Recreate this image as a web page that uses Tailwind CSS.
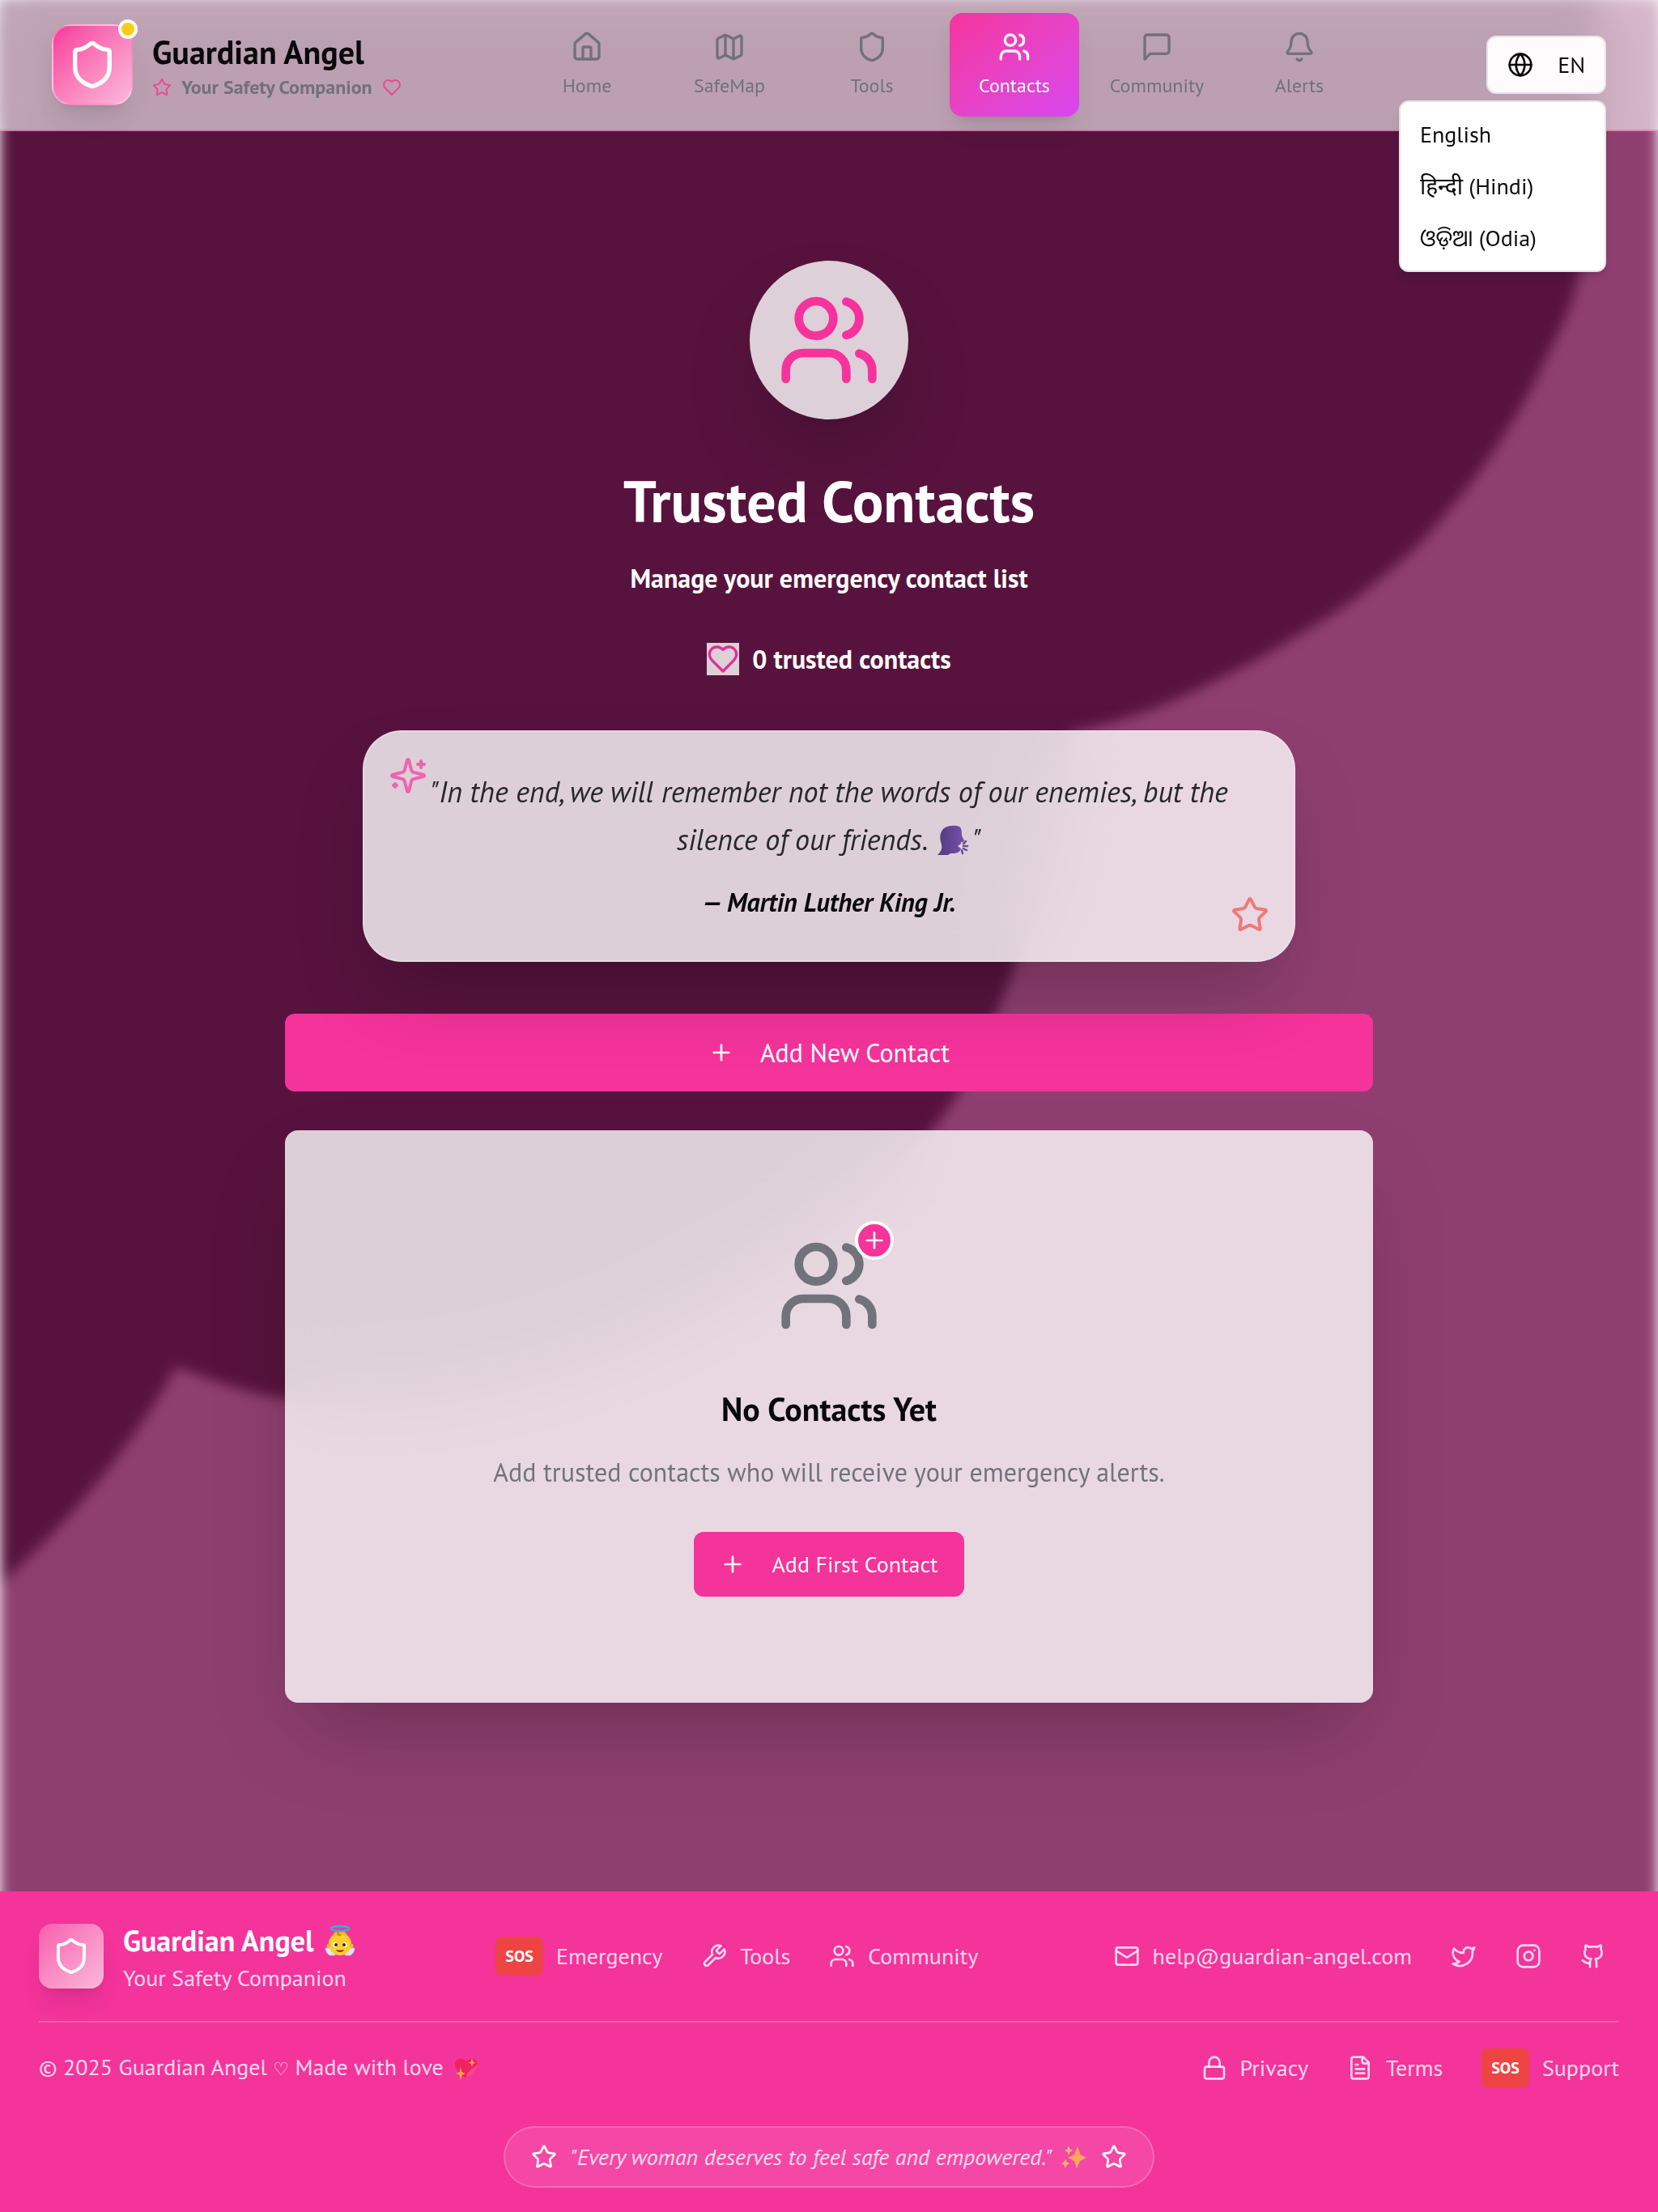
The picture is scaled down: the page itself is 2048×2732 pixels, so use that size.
<!DOCTYPE html>
<html lang="en">
<head>
<meta charset="utf-8">
<meta name="viewport" content="width=device-width, initial-scale=1">
<title>Guardian Angel – Trusted Contacts</title>
<script src="https://cdn.jsdelivr.net/npm/@tailwindcss/browser@4"></script>
</head>
<body class="bg-white font-['PT_Sans','Lato','Noto_Sans_Oriya','Noto_Sans_Devanagari','Noto_Sans',sans-serif] text-zinc-950 antialiased">
<!-- Icon sprite -->
<svg class="hidden" aria-hidden="true">
  <symbol id="shield" viewBox="0 0 24 24"><path d="M20 13c0 5-3.5 7.5-7.66 8.95a1 1 0 0 1-.67-.01C7.5 20.5 4 18 4 13V6a1 1 0 0 1 1-1c2 0 4.500-1.200 6.240-2.720a1.170 1.170 0 0 1 1.520 0C14.510 3.810 17 5 19 5a1 1 0 0 1 1 1z"/></symbol>
  <symbol id="star" viewBox="0 0 24 24"><path d="M11.525 2.295a.53.53 0 0 1 .95 0l2.310 4.679a2.123 2.123 0 0 0 1.595 1.160l5.166.756a.53.53 0 0 1 .294.904l-3.736 3.638a2.123 2.123 0 0 0-.611 1.878l.882 5.140a.53.53 0 0 1-.771.560l-4.618-2.428a2.122 2.122 0 0 0-1.973 0L6.396 21.010a.53.53 0 0 1-.770-.560l.881-5.139a2.122 2.122 0 0 0-.611-1.879L2.160 9.795a.53.53 0 0 1 .294-.906l5.165-.755a2.122 2.122 0 0 0 1.597-1.160z"/></symbol>
  <symbol id="heart" viewBox="0 0 24 24"><path d="M19 14c1.490-1.460 3-3.210 3-5.500A5.500 5.500 0 0 0 16.500 3c-1.760 0-3 .5-4.500 2-1.500-1.500-2.740-2-4.500-2A5.500 5.500 0 0 0 2 8.500c0 2.300 1.500 4.050 3 5.500l7 7Z"/></symbol>
  <symbol id="home" viewBox="0 0 24 24"><path d="M15 21v-8a1 1 0 0 0-1-1h-4a1 1 0 0 0-1 1v8"/><path d="M3 10a2 2 0 0 1 .709-1.528l7-5.999a2 2 0 0 1 2.582 0l7 5.999A2 2 0 0 1 21 10v9a2 2 0 0 1-2 2H5a2 2 0 0 1-2-2z"/></symbol>
  <symbol id="map" viewBox="0 0 24 24"><path d="M14.106 5.553a2 2 0 0 0 1.788 0l3.659-1.830A1 1 0 0 1 21 4.619v12.764a1 1 0 0 1-.553.894l-4.553 2.277a2 2 0 0 1-1.788 0l-4.212-2.106a2 2 0 0 0-1.788 0l-3.659 1.830A1 1 0 0 1 3 19.381V6.618a1 1 0 0 1 .553-.894l4.553-2.277a2 2 0 0 1 1.788 0z"/><path d="M15 5.764v15M9 3.236v15"/></symbol>
  <symbol id="users" viewBox="0 0 24 24"><path d="M16 21v-2a4 4 0 0 0-4-4H6a4 4 0 0 0-4 4v2"/><circle cx="9" cy="7" r="4"/><path d="M22 21v-2a4 4 0 0 0-3-3.870M16 3.130a4 4 0 0 1 0 7.750"/></symbol>
  <symbol id="chat" viewBox="0 0 24 24"><path d="M21 15a2 2 0 0 1-2 2H7l-4 4V5a2 2 0 0 1 2-2h14a2 2 0 0 1 2 2z"/></symbol>
  <symbol id="bell" viewBox="0 0 24 24"><path d="M10.268 21a2 2 0 0 0 3.464 0M3.262 15.326A1 1 0 0 0 4 17h16a1 1 0 0 0 .740-1.673C19.410 13.956 18 12.499 18 8A6 6 0 0 0 6 8c0 4.499-1.411 5.956-2.738 7.326"/></symbol>
  <symbol id="globe" viewBox="0 0 24 24"><circle cx="12" cy="12" r="10"/><path d="M12 2a14.500 14.500 0 0 0 0 20 14.500 14.500 0 0 0 0-20M2 12h20"/></symbol>
  <symbol id="plus" viewBox="0 0 24 24"><path d="M5 12h14M12 5v14"/></symbol>
  <symbol id="sparkles" viewBox="0 0 24 24"><path d="M9.937 15.500A2 2 0 0 0 8.500 14.063l-6.135-1.582a.5.5 0 0 1 0-.962L8.500 9.936A2 2 0 0 0 9.937 8.500l1.582-6.135a.5.5 0 0 1 .963 0L14.063 8.500A2 2 0 0 0 15.500 9.937l6.135 1.581a.5.5 0 0 1 0 .964L15.500 14.063a2 2 0 0 0-1.437 1.437l-1.582 6.135a.5.5 0 0 1-.963 0z"/><path d="M20 3v4M22 5h-4M4 17v2M5 18H3"/></symbol>
  <symbol id="wrench" viewBox="0 0 24 24"><path d="M14.700 6.300a1 1 0 0 0 0 1.400l1.600 1.600a1 1 0 0 0 1.400 0l3.770-3.770a6 6 0 0 1-7.940 7.940l-6.910 6.910a2.120 2.120 0 0 1-3-3l6.910-6.910a6 6 0 0 1 7.940-7.940l-3.760 3.760z"/></symbol>
  <symbol id="mail" viewBox="0 0 24 24"><rect width="20" height="16" x="2" y="4" rx="2"/><path d="m22 7-8.970 5.700a1.940 1.940 0 0 1-2.060 0L2 7"/></symbol>
  <symbol id="twitter" viewBox="0 0 24 24"><path d="M22 4s-.7 2.100-2 3.400c1.600 10-9.400 17.300-18 11.600 2.200.1 4.400-.6 6-2C3 15.500.5 9.600 3 5c2.200 2.600 5.600 4.100 9 4-.9-4.200 4-6.600 7-3.800 1.100 0 3-1.200 3-1.200z"/></symbol>
  <symbol id="instagram" viewBox="0 0 24 24"><rect width="20" height="20" x="2" y="2" rx="5"/><path d="M16 11.370A4 4 0 1 1 12.630 8 4 4 0 0 1 16 11.370zM17.500 6.500h.01"/></symbol>
  <symbol id="github" viewBox="0 0 24 24"><path d="M15 22v-4a4.800 4.800 0 0 0-1-3.500c3 0 6-2 6-5.500.08-1.250-.27-2.480-1-3.500.28-1.150.28-2.350 0-3.500 0 0-1 0-3 1.500-2.640-.5-5.360-.5-8 0C6 2 5 2 5 2c-.3 1.150-.3 2.350 0 3.500A5.403 5.403 0 0 0 4 9c0 3.500 3 5.500 6 5.500-.39.49-.68 1.050-.85 1.650-.17.6-.22 1.230-.15 1.850v4"/><path d="M9 18c-4.510 2-5-2-7-2"/></symbol>
  <symbol id="lock" viewBox="0 0 24 24"><rect width="18" height="11" x="3" y="11" rx="2"/><path d="M7 11V7a5 5 0 0 1 10 0v4"/></symbol>
  <symbol id="file" viewBox="0 0 24 24"><path d="M15 2H6a2 2 0 0 0-2 2v16a2 2 0 0 0 2 2h12a2 2 0 0 0 2-2V7ZM14 2v4a2 2 0 0 0 2 2h4M10 9H8M16 13H8M16 17H8"/></symbol>
</svg>

<div class="relative isolate flex min-h-screen flex-col overflow-hidden">
  <!-- Blurred backdrop -->
  <svg class="absolute inset-0 -z-10 size-full blur-[8px]" viewBox="0 0 2048 2732" preserveAspectRatio="none" aria-hidden="true">
    <rect width="2048" height="2732" fill="#8f3f6f"/>
    <path fill="#57133d" d="M0 0H1972C1974 150 1968 265 1949 344C1942 380 1928 405 1908 446C1892 480 1880 503 1860 533C1840 567 1816 599 1789 630C1766 660 1738 688 1707 712C1675 740 1642 762 1605 783C1572 804 1540 822 1503 839C1462 861 1420 878 1375 891L1320 905C1316 1010 1286 1110 1254 1190C1240 1232 1215 1290 1185 1347C1130 1440 1020 1520 900 1600C760 1690 560 1735 440 1734C350 1733 280 1712 218 1687C160 1790 80 1885 0 1955Z"/>
  </svg>

  <header class="relative z-20 flex h-[162px] items-center justify-between border-b-2 border-pink-500/30 bg-white/60 px-16 backdrop-blur-[24px]">
    <a href="#" class="flex w-[430px] items-center gap-6">
      <span class="relative flex size-[100px] shrink-0 items-center justify-center rounded-[24px] border-2 border-white/30 bg-linear-to-br from-[#f6339c] to-[#f9b8dc] text-white shadow-[0_20px_30px_-6px_rgb(0_0_0/0.1),0_8px_12px_-8px_rgb(0_0_0/0.1)]">
        <svg class="size-16 fill-none stroke-current stroke-2 [stroke-linecap:round] [stroke-linejoin:round]"><use href="#shield"/></svg>
        <span class="absolute -top-2 -right-2 size-6 rounded-full border-4 border-white bg-[#facc15]"></span>
      </span>
      <span class="flex flex-col gap-1 pt-1">
        <span class="text-[40px] leading-[48px] font-bold">Guardian Angel</span>
        <span class="flex items-center gap-3 text-2xl leading-8 font-bold whitespace-nowrap text-[#71717a]">
          <svg class="size-6 fill-none stroke-[#ec4899] stroke-2 [stroke-linecap:round] [stroke-linejoin:round]"><use href="#star"/></svg>
          Your Safety Companion
          <svg class="size-6 fill-none stroke-[#ec4899] stroke-2 [stroke-linecap:round] [stroke-linejoin:round]"><use href="#heart"/></svg>
        </span>
      </span>
    </a>

    <nav class="flex gap-4 text-2xl leading-8 text-[#71717a]" aria-label="Main">
      <a href="#" class="flex h-32 w-40 flex-col items-center justify-center gap-3 rounded-2xl"><svg class="size-10 fill-none stroke-current stroke-2 [stroke-linecap:round] [stroke-linejoin:round]"><use href="#home"/></svg>Home</a>
      <a href="#" class="flex h-32 w-40 flex-col items-center justify-center gap-3 rounded-2xl"><svg class="size-10 fill-none stroke-current stroke-2 [stroke-linecap:round] [stroke-linejoin:round]"><use href="#map"/></svg>SafeMap</a>
      <a href="#" class="flex h-32 w-40 flex-col items-center justify-center gap-3 rounded-2xl"><svg class="size-10 fill-none stroke-current stroke-2 [stroke-linecap:round] [stroke-linejoin:round]"><use href="#shield"/></svg>Tools</a>
      <a href="#" aria-current="page" class="flex h-32 w-40 flex-col items-center justify-center gap-3 rounded-2xl bg-linear-to-br from-[#f6339c] to-[#d946ef] text-white shadow-[0_20px_30px_-6px_rgb(0_0_0/0.1),0_8px_12px_-8px_rgb(0_0_0/0.1)]"><svg class="size-10 fill-none stroke-current stroke-2 [stroke-linecap:round] [stroke-linejoin:round]"><use href="#users"/></svg>Contacts</a>
      <a href="#" class="flex h-32 w-40 flex-col items-center justify-center gap-3 rounded-2xl"><svg class="size-10 fill-none stroke-current stroke-2 [stroke-linecap:round] [stroke-linejoin:round]"><use href="#chat"/></svg>Community</a>
      <a href="#" class="flex h-32 w-40 flex-col items-center justify-center gap-3 rounded-2xl"><svg class="size-10 fill-none stroke-current stroke-2 [stroke-linecap:round] [stroke-linejoin:round]"><use href="#bell"/></svg>Alerts</a>
    </nav>

    <div class="relative text-[28px] leading-10">
      <button type="button" aria-haspopup="menu" aria-expanded="true" class="flex h-[72px] w-[148px] items-center justify-between rounded-xl border-2 border-zinc-200 bg-[#fffafc] px-6">
        <svg class="size-8 fill-none stroke-current stroke-2 [stroke-linecap:round] [stroke-linejoin:round]"><use href="#globe"/></svg>EN
      </button>
      <div role="menu" class="absolute top-full right-0 mt-2 w-64 rounded-xl border-2 border-zinc-200 bg-white p-2 shadow-[0_8px_12px_-2px_rgb(0_0_0/0.1),0_4px_8px_-4px_rgb(0_0_0/0.1)]">
        <button type="button" role="menuitem" class="flex h-16 w-full items-center px-4">English</button>
        <button type="button" role="menuitem" class="flex h-16 w-full items-center px-4">हिन्दी (Hindi)</button>
        <button type="button" role="menuitem" class="flex h-16 w-full items-center px-4">ଓଡ଼ିଆ (Odia)</button>
      </div>
    </div>
  </header>

  <main class="flex flex-1 flex-col items-center px-8 pt-40 pb-[233px] text-center">
    <div class="flex size-[196px] items-center justify-center rounded-full bg-white/80 text-[#f6339c] shadow-[0_50px_100px_-24px_rgb(0_0_0/0.25)]">
      <svg class="size-32 fill-none stroke-current stroke-2 [stroke-linecap:round] [stroke-linejoin:round]"><use href="#users"/></svg>
    </div>
    <h1 class="mt-14 text-[72px] leading-[90px] font-bold text-white">Trusted Contacts</h1>
    <p class="mt-[26px] text-[32px] leading-12 font-bold text-white">Manage your emergency contact list</p>
    <p class="mt-[52px] flex items-center gap-4 text-[32px] leading-12 font-bold text-white">
      <svg class="size-10 bg-white/80 fill-none stroke-[#e12f93] stroke-2 [stroke-linecap:round] [stroke-linejoin:round]"><use href="#heart"/></svg>
      0 trusted contacts
    </p>

    <figure class="relative mt-16 w-full max-w-[1152px] rounded-[48px] border-2 border-white/20 bg-white/80 px-[62px] pt-11 pb-12 shadow-[0_50px_100px_-24px_rgb(0_0_0/0.25)] backdrop-blur-[48px]">
      <svg class="absolute top-[30px] left-[30px] size-12 fill-none stroke-[#ed64b0] stroke-2 [stroke-linecap:round] [stroke-linejoin:round]"><use href="#sparkles"/></svg>
      <blockquote class="px-4 text-[36px] leading-[59px] text-zinc-800 italic">"In the end, we will remember not the words of our enemies, but the silence of our friends. <svg class="mx-1 inline-block size-10 align-[-8px]" viewBox="0 0 40 40" role="img" aria-label="speaking head"><defs><linearGradient id="hd" x1="0" x2="1"><stop offset="0" stop-color="#523b7d"/><stop offset="1" stop-color="#7550ab"/></linearGradient></defs><path fill="url(#hd)" d="M1 38C6 33 7 30 6 25C3 17 4 9 9 5C14 1 24 1 28 3C31 5 31 9 31 14L34 20C34 22 31 22 30 22V24L26 27L30 30C29 35 24 36 19 36C15 36 15 38 14 38Z"/><path stroke="#6b4a9d" stroke-width="2.500" stroke-linecap="round" d="M33 24l3-3M33 27h5M33 30l4 2M31 32l1 4"/></svg>"</blockquote>
      <figcaption class="mt-6 text-[32px] leading-12 font-bold italic">— Martin Luther King Jr.</figcaption>
      <svg class="absolute right-[30px] bottom-8 size-12 fill-none stroke-[#f07878] stroke-2 [stroke-linecap:round] [stroke-linejoin:round]"><use href="#star"/></svg>
    </figure>

    <button type="button" class="mt-16 flex h-24 w-full max-w-[1344px] items-center justify-center gap-8 rounded-xl bg-[#f4339b] text-[32px] text-white">
      <svg class="size-8 fill-none stroke-current stroke-2 [stroke-linecap:round] [stroke-linejoin:round]"><use href="#plus"/></svg>Add New Contact
    </button>

    <section class="mt-12 flex w-full max-w-[1344px] flex-col items-center rounded-2xl bg-white/80 pt-32 pb-[131px] shadow-[0_50px_100px_-24px_rgb(0_0_0/0.25)] backdrop-blur-[48px]">
      <div class="relative text-[#71737b]">
        <svg class="size-32 fill-none stroke-current stroke-2 [stroke-linecap:round] [stroke-linejoin:round]"><use href="#users"/></svg>
        <span class="absolute -top-4 -right-4 flex size-12 items-center justify-center rounded-full border-4 border-white bg-[#f4339b] text-white">
          <svg class="size-8 shrink-0 fill-none stroke-current stroke-2 [stroke-linecap:round] [stroke-linejoin:round]"><use href="#plus"/></svg>
        </span>
      </div>
      <h2 class="mt-[60px] text-[40px] leading-[56px] font-bold">No Contacts Yet</h2>
      <p class="mt-[26px] text-[32px] leading-12 text-[#71737b]">Add trusted contacts who will receive your emergency alerts.</p>
      <button type="button" class="mt-[50px] flex h-20 items-center gap-8 rounded-xl bg-[#f4339b] px-8 text-[28px] text-white">
        <svg class="size-8 fill-none stroke-current stroke-2 [stroke-linecap:round] [stroke-linejoin:round]"><use href="#plus"/></svg>Add First Contact
      </button>
    </section>
  </main>

  <footer class="flex flex-col bg-[#f4339b] px-12 pt-8 pb-8 text-[28px] leading-10 text-white/80">
    <div class="flex h-24 items-center justify-between">
      <div class="flex w-[397px] items-center gap-6">
        <span class="flex size-20 shrink-0 items-center justify-center rounded-2xl bg-linear-to-br from-[#f85bae] to-[#f9b8dc] text-white shadow-[0_20px_30px_-6px_rgb(0_0_0/0.1),0_8px_12px_-8px_rgb(0_0_0/0.1)]">
          <svg class="size-12 fill-none stroke-current stroke-2 [stroke-linecap:round] [stroke-linejoin:round]"><use href="#shield"/></svg>
        </span>
        <div class="pt-[2px]">
          <p class="flex items-center gap-3 text-[36px] leading-[52px] font-bold whitespace-nowrap text-white">Guardian Angel
            <svg class="size-10" viewBox="0 0 40 40" role="img" aria-label="baby angel"><path d="M2 29c5-1 8 0 10 3l2 6H7c-3-2-5-5-5-9zM38 29c-5-1-8 0-10 3l-2 6h7c3-2 5-5 5-9z" fill="#e5e5f5" stroke="#b9b3d6"/><ellipse cx="20" cy="24" rx="14" ry="14" fill="#ffd02f"/><circle cx="6" cy="26" r="2.500" fill="#f7b52c"/><circle cx="34" cy="26" r="2.500" fill="#f7b52c"/><path d="M10 15C12 10 16 7 20 7s8 3 10 8c-3 0-5-1-7-3-3 3-8 2-13 3z" fill="#f5b921"/><path d="M20 8c-4 1-4 5 1 5" stroke="#c8841c" stroke-width="2" fill="none"/><ellipse cx="20" cy="5" rx="11" ry="3" fill="none" stroke="#34aee0" stroke-width="2.500"/><ellipse cx="14" cy="25" rx="2.500" ry="3" fill="#fff"/><ellipse cx="26" cy="25" rx="2.500" ry="3" fill="#fff"/><circle cx="15" cy="25" r="2" fill="#3b2530"/><circle cx="25" cy="25" r="2" fill="#3b2530"/><path d="M15 31c3 1 7 1 10 0-1 4-9 4-10 0z" fill="#a0214b"/></svg>
          </p>
          <p class="whitespace-nowrap">Your Safety Companion</p>
        </div>
      </div>
      <nav class="flex items-center gap-12" aria-label="Footer">
        <a href="#" class="flex items-center gap-4"><span class="flex h-12 items-center rounded-lg bg-[#ef4444] px-3 text-xl font-bold text-white">SOS</span>Emergency</a>
        <a href="#" class="flex items-center gap-4"><svg class="size-8 fill-none stroke-current stroke-2 [stroke-linecap:round] [stroke-linejoin:round]"><use href="#wrench"/></svg>Tools</a>
        <a href="#" class="flex items-center gap-4"><svg class="size-8 fill-none stroke-current stroke-2 [stroke-linecap:round] [stroke-linejoin:round]"><use href="#users"/></svg>Community</a>
      </nav>
      <div class="flex items-center gap-8">
        <a href="mailto:help@guardian-angel.com" class="flex items-center gap-4"><svg class="size-8 fill-none stroke-current stroke-2 [stroke-linecap:round] [stroke-linejoin:round]"><use href="#mail"/></svg>help@guardian-angel.com</a>
        <div class="flex gap-4">
          <a href="#" aria-label="Twitter" class="p-4"><svg class="size-8 fill-none stroke-current stroke-2 [stroke-linecap:round] [stroke-linejoin:round]"><use href="#twitter"/></svg></a>
          <a href="#" aria-label="Instagram" class="p-4"><svg class="size-8 fill-none stroke-current stroke-2 [stroke-linecap:round] [stroke-linejoin:round]"><use href="#instagram"/></svg></a>
          <a href="#" aria-label="GitHub" class="p-4"><svg class="size-8 fill-none stroke-current stroke-2 [stroke-linecap:round] [stroke-linejoin:round]"><use href="#github"/></svg></a>
        </div>
      </div>
    </div>
    <div class="mt-8 flex items-center justify-between border-t-2 border-white/20 pt-8">
      <p class="flex items-center gap-3"><span>© 2025 Guardian Angel <span class="font-['DejaVu_Sans'] text-[22px] font-bold">♡</span> Made with love</span>
        <svg class="size-8 opacity-80" viewBox="0 0 32 32" role="img" aria-label="sparkling heart"><path d="M16 29C8 23 2 18 2 11c0-7 9-9 14-3 5-6 14-4 14 3 0 7-6 12-14 18z" fill="#ee2055"/><path d="M16 29C22 25 30 18 30 11c-4 6-14 8-14 18z" fill="#ff4d8d"/><path d="M9 15l1.500 6 4 2-4 2L9 31l-1.500-6-4-2 4-2zM23 4l1 4 3 1.500-3 1.500-1 4-1-4-3-1.500 3-1.500z" fill="#ffc02e"/></svg>
      </p>
      <div class="flex items-center gap-12">
        <a href="#" class="flex items-center gap-4"><svg class="size-8 fill-none stroke-current stroke-2 [stroke-linecap:round] [stroke-linejoin:round]"><use href="#lock"/></svg>Privacy</a>
        <a href="#" class="flex items-center gap-4"><svg class="size-8 fill-none stroke-current stroke-2 [stroke-linecap:round] [stroke-linejoin:round]"><use href="#file"/></svg>Terms</a>
        <a href="#" class="flex items-center gap-4"><span class="flex h-12 items-center rounded-lg bg-[#ef4444] px-3 text-xl font-bold text-white">SOS</span>Support</a>
      </div>
    </div>
    <div class="mt-12 flex h-[76px] items-center gap-4 self-center rounded-full border-2 border-white/20 bg-white/10 px-8">
      <svg class="size-8 fill-none stroke-white stroke-2 [stroke-linecap:round] [stroke-linejoin:round]"><use href="#star"/></svg>
      <p class="flex items-center gap-2 italic">"Every woman deserves to feel safe and empowered."
        <svg class="size-9" viewBox="0 0 36 36" role="img" aria-label="sparkles"><path d="M23 5l3.500 10L34 19l-8 4-4 9-3-9-8-4 8-4z" fill="#ffa75e"/><path d="M12 4l1.500 4 3.500 2-3.500 2L12 16l-1.500-4L7 10l3.500-2zM8 20l1.500 4 3.500 2-3.500 2L8 32l-1.500-4L3 26l3.500-2z" fill="#ffb36b"/></svg>
      </p>
      <svg class="size-8 fill-none stroke-white stroke-2 [stroke-linecap:round] [stroke-linejoin:round]"><use href="#star"/></svg>
    </div>
  </footer>
</div>
</body>
</html>
